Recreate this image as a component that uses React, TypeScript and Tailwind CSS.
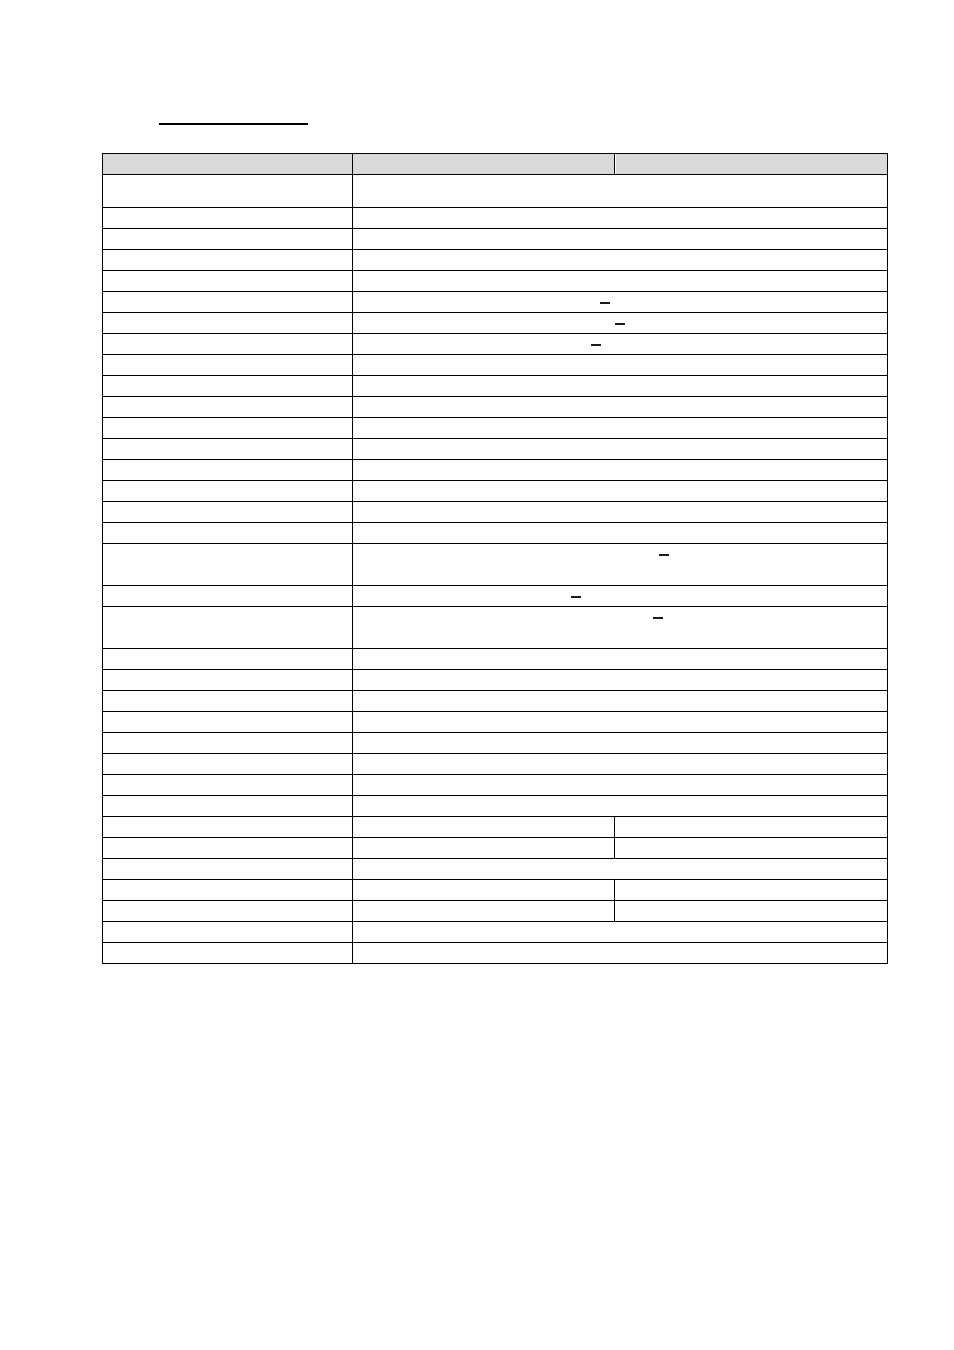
type Row = {
  h: number;
  split?: boolean;
  dash?: number; // x offset of the small mark inside the value cell
};

const rows: Row[] = [
  { h: 33 },
  { h: 21 },
  { h: 21 },
  { h: 21 },
  { h: 21 },
  { h: 21, dash: 247 },
  { h: 21, dash: 262 },
  { h: 21, dash: 238 },
  { h: 21 },
  { h: 21 },
  { h: 21 },
  { h: 21 },
  { h: 21 },
  { h: 21 },
  { h: 21 },
  { h: 21 },
  { h: 21 },
  { h: 42, dash: 306 },
  { h: 21, dash: 218 },
  { h: 42, dash: 300 },
  { h: 21 },
  { h: 21 },
  { h: 21 },
  { h: 21 },
  { h: 21 },
  { h: 21 },
  { h: 21 },
  { h: 21 },
  { h: 21, split: true },
  { h: 21, split: true },
  { h: 21 },
  { h: 21, split: true },
  { h: 21, split: true },
  { h: 21 },
  { h: 21 },
];

function SpecRow({ row }: { row: Row }) {
  return (
    <div className="flex border-b border-black box-border" style={{ height: row.h }}>
      <div className="w-[250px] shrink-0 border-r border-black" />
      {row.split ? (
        <>
          <div className="w-[262px] shrink-0 border-r border-black" />
          <div className="flex-1" />
        </>
      ) : (
        <div className="flex-1">
          {row.dash !== undefined && (
            <div
              className="mt-[10px] h-[2px] w-[10px] bg-[#1a1a1a]"
              style={{ marginLeft: row.dash }}
            />
          )}
        </div>
      )}
    </div>
  );
}

export default function App() {
  return (
    <div
      className="w-[954px] min-h-[1350px] bg-white"
      style={{ fontFamily: '"Liberation Sans", Arial, sans-serif' }}
    >
      {/* section heading (underline only) */}
      <div className="pt-[123px] pl-[159px]">
        <div className="h-[2px] w-[149px] bg-black" />
      </div>

      {/* spec table */}
      <div className="mt-[28px] ml-[102px] w-[786px] border-x border-t border-black box-border">
        <div className="flex h-[21px] border-b border-black bg-[#d9d9d9] box-border">
          <div className="w-[250px] shrink-0 border-r border-black" />
          <div className="w-[262px] shrink-0 border-r border-black" />
          <div className="flex-1 border-l border-white" />
        </div>
        {rows.map((r, i) => (
          <SpecRow key={i} row={r} />
        ))}
      </div>
    </div>
  );
}
